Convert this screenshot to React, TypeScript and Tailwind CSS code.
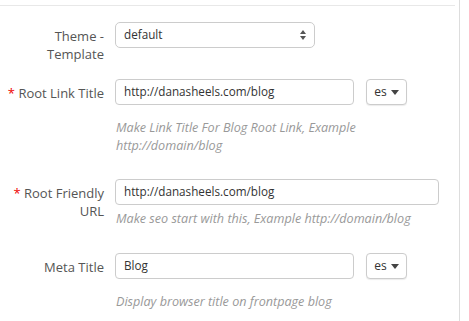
const font = { fontFamily: '"Open Sans", "Liberation Sans", sans-serif' };

function Label({ children, required }: { children: React.ReactNode; required?: boolean }) {
  return (
    <div className="ml-[2px] w-[102px] shrink-0 pt-[5px] text-right text-[13px] leading-[18px] text-[#555]">
      {required && <span className="text-[#e00]">* </span>}
      {children}
    </div>
  );
}

function LangButton() {
  return (
    <button className="ml-[12px] flex h-[26px] w-[41px] items-center justify-center gap-[4px] rounded-[4px] border border-[#ccc] bg-white text-[12px] text-[#333] shadow-[0_1px_1px_rgba(0,0,0,0.08)]">
      es
      <span className="mt-[1px] border-x-[4px] border-t-[5px] border-x-transparent border-t-[#444]" />
    </button>
  );
}

function TextInput({ value, width }: { value: string; width: string }) {
  return (
    <div className={`flex h-[26px] ${width} items-center rounded-[4px] border border-[#ccc] bg-white pl-[8px] text-[11.7px] text-[#333]`}>
      {value}
    </div>
  );
}

function Help({ children, className = "" }: { children: React.ReactNode; className?: string }) {
  return (
    <p className={`whitespace-nowrap pl-[1px] text-[12.6px] italic leading-[18px] text-[#999] ${className}`}>
      {children}
    </p>
  );
}

export default function App() {
  return (
    <div className="h-[321px] w-[460px] border-r border-[#ddd] bg-white" style={font}>
      {/* top rule */}
      <div className="h-[6px] w-[455px] border-b border-[#e8e8e8]" />

      <div className="pt-[16px]">
        {/* Theme - Template */}
        <div className="flex">
          <Label>
            Theme -<br />Template
          </Label>
          <div className="ml-[11px]">
            <div className="flex h-[26px] w-[200px] items-center justify-between rounded-[5px] border border-[#ccc] bg-white pl-[8px] pr-[8px] text-[11.7px] text-[#333]">
              default
              <span className="flex flex-col items-center gap-[2px]">
                <span className="border-x-[3px] border-b-[4px] border-x-transparent border-b-[#555]" />
                <span className="border-x-[3px] border-t-[4px] border-x-transparent border-t-[#555]" />
              </span>
            </div>
          </div>
        </div>

        {/* Root Link Title */}
        <div className="mt-[16px] flex">
          <Label required>Root Link Title</Label>
          <div className="ml-[11px]">
            <div className="flex">
              <TextInput value="http://danasheels.com/blog" width="w-[239px]" />
              <LangButton />
            </div>
            <Help className="mt-[14px]">
              Make Link Title For Blog Root Link, Example
              <br />
              http://domain/blog
            </Help>
          </div>
        </div>

        {/* Root Friendly URL */}
        <div className="mt-[24px] flex">
          <Label required>
            Root Friendly
            <br />
            URL
          </Label>
          <div className="ml-[11px]">
            <TextInput value="http://danasheels.com/blog" width="w-[324px]" />
            <Help className="mt-[5px]">Make seo start with this, Example http://domain/blog</Help>
          </div>
        </div>

        {/* Meta Title */}
        <div className="mt-[25px] flex">
          <Label>Meta Title</Label>
          <div className="ml-[11px]">
            <div className="flex">
              <TextInput value="Blog" width="w-[239px]" />
              <LangButton />
            </div>
            <Help className="mt-[14px]">Display browser title on frontpage blog</Help>
          </div>
        </div>
      </div>
    </div>
  );
}
